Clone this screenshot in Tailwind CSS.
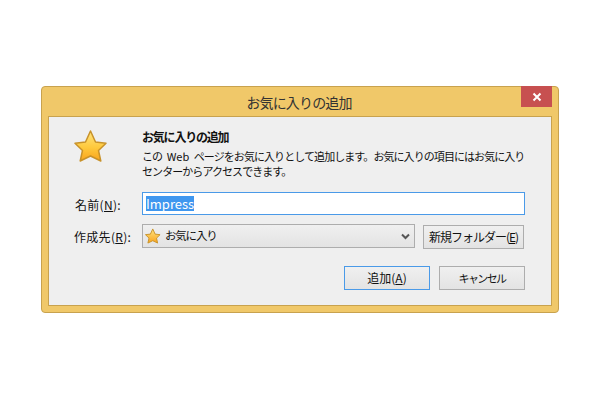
<!DOCTYPE html>
<html lang="ja">
<head>
<meta charset="utf-8" />
<script src="https://cdn.jsdelivr.net/npm/@tailwindcss/browser@4"></script>
<title>お気に入りの追加</title>
</head>
<body class="w-[600px] h-[400px] overflow-hidden bg-white font-['Noto_Sans_CJK_JP','Noto_Sans',sans-serif] text-[12px] text-[#111]">
<div class="pt-[86px] pl-[41px]">
	<!-- window -->
	<div class="relative w-[518px] h-[227px] bg-[#f0c869] border border-[#c8a24e] rounded-[4px] px-[6px] pb-[6px]">
		<div class="h-[29px] flex items-center justify-center text-[14px] tracking-[-0.85px] text-[#333] pt-[2px] pr-[2px]">お気に入りの追加</div>
		<button class="absolute top-[-1px] right-[6px] w-[31px] h-[21px] bg-[#c75050] flex items-center justify-center">
			<svg width="10" height="10" viewBox="0 0 10 10"><path d="M1.5 1.5 8.5 8.5M8.5 1.5 1.5 8.5" stroke="#fff" stroke-width="2" /></svg>
		</button>

		<!-- client area -->
		<div class="h-[190px] bg-[#efefef] border border-[#c8a24e] pl-[93px] pr-[26px] relative">
			<svg class="absolute left-[25px] top-[12px]" width="34" height="34" viewBox="0 0 34 34">
				<defs>
					<linearGradient id="g" x1="0" y1="0" x2="0" y2="1">
						<stop offset="0" stop-color="#ffe480" />
						<stop offset="0.55" stop-color="#ffc93c" />
						<stop offset="1" stop-color="#f9a31c" />
					</linearGradient>
				</defs>
				<path d="M16.500 2 21.500 13 32 14.200 24.500 21.500 26.800 32 16.500 27 6.200 32 8.500 21.500 1 14.200 11.500 13Z" fill="url(#g)" stroke="#c8922a" stroke-width="1.500" stroke-linejoin="round" />
			</svg>

			<div class="pt-[12px] leading-[16px]">
				<div class="font-bold tracking-[-1.2px]">お気に入りの追加</div>
				<p class="mt-[4px] leading-[15px] text-[11px] tracking-[-0.93px] whitespace-nowrap">この <span class="tracking-normal mx-[3px]">Web</span> ページをお気に入りとして追加します。お気に入りの項目にはお気に入り<br />センターからアクセスできます。</p>
			</div>

			<!-- name row -->
			<div class="relative mt-[13px] h-[23px] border border-[#4a9ae8] bg-white flex items-center pl-[3px]">
				<span class="absolute left-[-68px] top-[3px] whitespace-nowrap tracking-[0.3px]">名前(<u>N</u>):</span>
				<span class="bg-[#3f97ef] text-white text-[13px] leading-[15px]">Impress</span>
			</div>

			<!-- folder row -->
			<div class="relative mt-[9px] flex items-start">
				<span class="absolute left-[-68px] top-[4px] whitespace-nowrap tracking-[0.3px]">作成先(<u>R</u>):</span>
				<div class="w-[273px] h-[24px] border border-[#adadad] bg-gradient-to-b from-[#f0f0f0] to-[#e3e3e3] flex items-center pl-[2px] pr-[3px]">
					<svg width="16" height="16" viewBox="0 0 34 34">
						<defs>
							<linearGradient id="g2" x1="0" y1="0" x2="0" y2="1">
								<stop offset="0" stop-color="#ffe480" />
								<stop offset="1" stop-color="#f9a31c" />
							</linearGradient>
						</defs>
						<path d="M16.500 2 21.500 13 32 14.200 24.500 21.500 26.800 32 16.500 27 6.200 32 8.500 21.500 1 14.200 11.500 13Z" fill="url(#g2)" stroke="#c8922a" stroke-width="2" stroke-linejoin="round" />
					</svg>
					<span class="ml-[4px] text-[11.5px] tracking-[-1.2px]">お気に入り</span>
					<svg class="ml-auto mr-[1px]" width="9" height="7" viewBox="0 0 9 7"><path d="M1 1.5 4.500 5 8 1.500" fill="none" stroke="#555" stroke-width="2" /></svg>
				</div>
				<button class="ml-[8px] mt-[1px] w-[101px] h-[24px] border border-[#adadad] bg-gradient-to-b from-[#f0f0f0] to-[#e3e3e3] whitespace-nowrap tracking-[-1px]">新規フォルダー(<u>E</u>)</button>
			</div>

			<!-- buttons -->
			<div class="mt-[17px] flex justify-end gap-[9px]">
				<button class="w-[86px] h-[24px] border border-[#4a9ae8] bg-gradient-to-b from-[#f0f0f0] to-[#e3e3e3]">追加(<u>A</u>)</button>
				<button class="w-[86px] h-[24px] border border-[#adadad] bg-gradient-to-b from-[#f0f0f0] to-[#e3e3e3] text-[11px] tracking-[-1.6px]">キャンセル</button>
			</div>
		</div>
	</div>
</div>
</body>
</html>
